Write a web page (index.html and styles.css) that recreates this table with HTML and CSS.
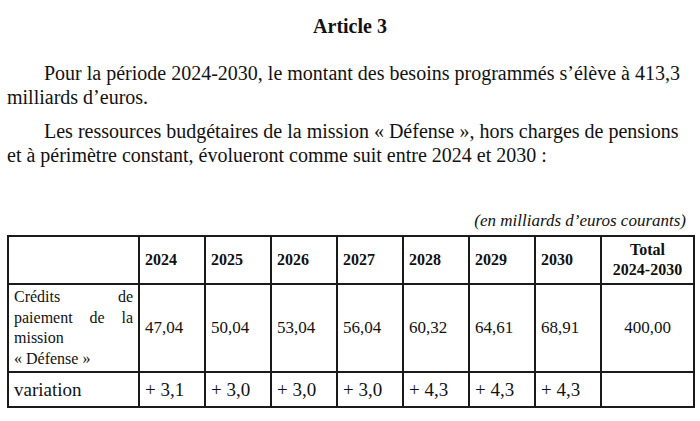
FILE: index.html
```html
<!DOCTYPE html>
<html lang="fr">
<head>
<meta charset="utf-8">
<title>Article 3</title>
<link rel="stylesheet" href="styles.css">
</head>
<body>
<main class="page">
  <h1 class="title">Article 3</h1>
  <p class="para">Pour la période 2024-2030, le montant des besoins programmés s’élève à 413,3 milliards d’euros.</p>
  <p class="para">Les ressources budgétaires de la mission « Défense », hors charges de pensions et à périmètre constant, évolueront comme suit entre 2024 et 2030 :</p>
  <p class="unit">(en milliards d’euros courants)</p>
  <table class="budget">
    <colgroup>
      <col class="c-label">
      <col class="c-year"><col class="c-year"><col class="c-year"><col class="c-year">
      <col class="c-year"><col class="c-year"><col class="c-year">
      <col class="c-total">
    </colgroup>
    <tr class="head">
      <th></th>
      <th>2024</th><th>2025</th><th>2026</th><th>2027</th><th>2028</th><th>2029</th><th>2030</th>
      <th class="total">Total<br>2024-2030</th>
    </tr>
    <tr class="credits">
      <td class="label">Crédits de paiement de la mission<br>« Défense »</td>
      <td>47,04</td><td>50,04</td><td>53,04</td><td>56,04</td><td>60,32</td><td>64,61</td><td>68,91</td>
      <td class="total">400,00</td>
    </tr>
    <tr class="variation">
      <td>variation</td>
      <td>+ 3,1</td><td>+ 3,0</td><td>+ 3,0</td><td>+ 3,0</td><td>+ 4,3</td><td>+ 4,3</td><td>+ 4,3</td>
      <td></td>
    </tr>
  </table>
</main>
</body>
</html>
```

FILE: styles.css
```css
html, body {
  margin: 0;
  padding: 0;
  background: #ffffff;
}

body {
  font-family: "Liberation Serif", "Times New Roman", serif;
  color: #111111;
}

.page {
  padding: 14px 7px 0 7px;
}

.title {
  margin: 0;
  font-size: 20px;
  line-height: 24px;
  font-weight: bold;
  text-align: center;
}

.para {
  margin: 23px 0 0 0;
  font-size: 20px;
  line-height: 24px;
  text-indent: 37px;
}

.para + .para {
  margin-top: 10px;
}

.unit {
  margin: 44px 0 0 0;
  font-size: 17px;
  line-height: 20px;
  font-style: italic;
  text-align: right;
  padding-right: 7px;
}

.budget {
  margin-top: 4px;
  width: 686px;
  border-collapse: collapse;
  table-layout: fixed;
}

.c-label { width: 131px; }
.c-year { width: 66px; }
.c-total { width: 93px; }

.budget th,
.budget td {
  border: 2px solid #1a1a1a;
  padding: 0 5px;
  text-align: left;
  vertical-align: middle;
}

.head th {
  height: 46px;
  font-size: 16px;
  line-height: 20px;
  font-weight: bold;
}

.credits td {
  height: 86px;
  font-size: 17px;
  line-height: 20px;
}

.credits td.label {
  font-size: 16px;
  line-height: 20.5px;
  text-align: justify;
}

.variation td {
  height: 33px;
  font-size: 19px;
  line-height: 22px;
}

.budget .total {
  text-align: center;
}
```
